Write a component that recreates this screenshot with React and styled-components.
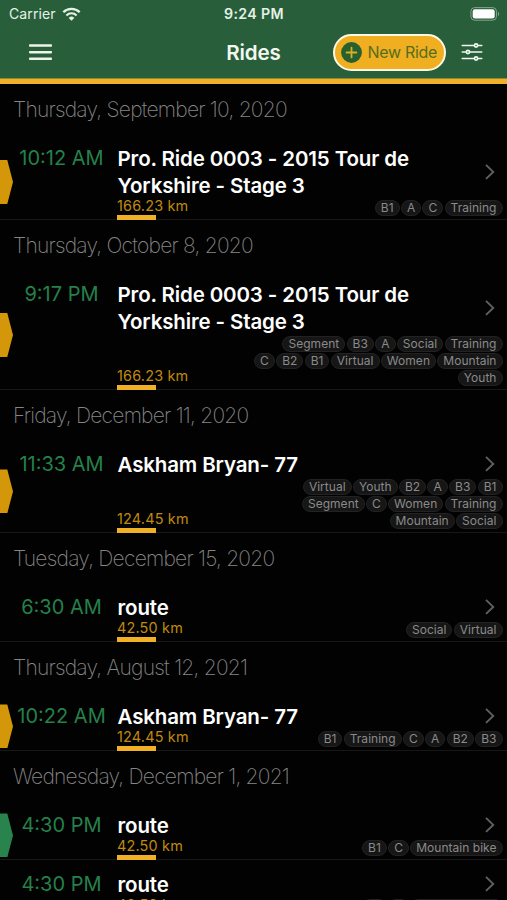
import React from "react";
import styled, { createGlobalStyle } from "styled-components";
import { IoOptionsOutline } from "react-icons/io5";

const GlobalStyle = createGlobalStyle`
  * {
    box-sizing: border-box;
  }

  body {
    margin: 0;
    background: #020202;
    font-family: Inter, "Liberation Sans", sans-serif;
  }
`;

const Screen = styled.div`
  height: 900px;
  overflow: hidden;
  background: #020202;
`;

const Header = styled.header`
  height: 84px;
  background: #285f3a;
  border-bottom: 5px solid #efb02a;
  box-shadow: inset 0 -1px 0 #8d8a30;
`;

const StatusBar = styled.div`
  display: grid;
  grid-template-columns: 1fr auto 1fr;
  align-items: center;
  height: 27px;
  padding: 0 7px 0 9px;
  color: #e6f1e6;
`;

const Carrier = styled.div`
  display: flex;
  align-items: center;
  gap: 6px;
  font-size: 14px;
  letter-spacing: 0.1px;
`;

const Clock = styled.div`
  margin-left: -1px;
  font-size: 14.2px;
  font-weight: 600;
  letter-spacing: 0.35px;
`;

const Battery = styled.div`
  display: flex;
  justify-content: flex-end;
`;

const NavBar = styled.nav`
  display: grid;
  grid-template-columns: minmax(0, 1fr) auto minmax(0, 1fr);
  align-items: center;
  height: 50px;
  padding: 0 22px;
`;

const MenuButton = styled.div`
  display: flex;
  padding-left: 6.5px;
`;

const Title = styled.h1`
  margin: 0;
  color: #f2f8f0;
  font-size: 20.6px;
  font-weight: 600;
  letter-spacing: -0.1px;
`;

const Actions = styled.div`
  display: flex;
  align-items: center;
  justify-content: flex-end;
  gap: 13px;
  color: #f1f7ee;
`;

const NewRide = styled.div`
  display: flex;
  flex: none;
  align-items: center;
  gap: 5.5px;
  width: 113px;
  height: 37px;
  padding-left: 6px;
  border: 2px solid #fdf8e6;
  border-radius: 19px;
  background: #efaf21;
  color: #566d1d;
  font-size: 16px;
  letter-spacing: -0.3px;
  white-space: nowrap;
`;

const DateHeading = styled.h2`
  height: 50px;
  margin: 0;
  padding-left: 13px;
  color: #858585;
  font-size: 21px;
  font-weight: 200;
  line-height: 51px;
  letter-spacing: -0.77px;
`;

const RideRow = styled.div`
  display: flex;
  min-height: 59px;
  padding-top: 11px;
  border-bottom: 1px solid #171717;
`;

const Ribbon = styled.div`
  flex: none;
  align-self: center;
  width: 13px;
  height: 44px;
  background: ${(props) => props.$color || "transparent"};
  clip-path: polygon(0 0, 56% 0, 100% 50%, 56% 100%, 0 100%);
`;

const Time = styled.div`
  flex: none;
  width: 97px;
  color: #25804a;
  font-size: 20px;
  line-height: 27px;
  text-align: center;
  white-space: nowrap;
`;

const RideBody = styled.div`
  flex: 1;
  display: flex;
  flex-direction: column;
  padding-left: 7px;
`;

const RideTop = styled.div`
  display: flex;
  align-items: center;
  justify-content: space-between;
  padding-right: 11px;
`;

const RideName = styled.div`
  width: 320px;
  padding-left: 0.5px;
  color: #fff;
  font-size: 20.5px;
  font-weight: 600;
  line-height: 27px;
  letter-spacing: -0.13px;
`;

const RideBottom = styled.div`
  display: flex;
  flex: 1;
  justify-content: space-between;
  margin-bottom: -1px;
  padding-right: 4.5px;
`;

const Distance = styled.div`
  flex: none;
  align-self: flex-end;
  width: 100px;
  color: #c18a0c;
  font-size: 14.4px;
  line-height: 14px;
  letter-spacing: 0.2px;
  white-space: nowrap;

  &::after {
    content: "";
    display: block;
    width: 39px;
    height: 5px;
    margin-top: 2px;
    background: #f1b127;
  }
`;

const Tags = styled.div`
  display: flex;
  flex-direction: column;
  gap: 1.2px;
  padding: 0.7px 0 3.9px;
`;

const TagLine = styled.div`
  display: flex;
  justify-content: flex-end;
  gap: 1.3px;
`;

const Tag = styled.span`
  height: 16px;
  padding: 0 5px;
  border: 1px solid #222;
  border-radius: 8px;
  background: #161616;
  color: #8a8a8a;
  font-size: 12px;
  line-height: 14px;
  letter-spacing: 0.03px;
  white-space: nowrap;
`;

const sections = [
  {
    date: "Thursday, September 10, 2020",
    rides: [
      {
        time: "10:12 AM",
        name: "Pro. Ride 0003 - 2015 Tour de Yorkshire - Stage 3",
        distance: "166.23 km",
        ribbon: "#d39709",
        tags: [["B1", "A", "C", "Training"]],
      },
    ],
  },
  {
    date: "Thursday, October 8, 2020",
    rides: [
      {
        time: "9:17 PM",
        name: "Pro. Ride 0003 - 2015 Tour de Yorkshire - Stage 3",
        distance: "166.23 km",
        ribbon: "#d39709",
        tags: [
          ["Segment", "B3", "A", "Social", "Training"],
          ["C", "B2", "B1", "Virtual", "Women", "Mountain"],
          ["Youth"],
        ],
      },
    ],
  },
  {
    date: "Friday, December 11, 2020",
    rides: [
      {
        time: "11:33 AM",
        name: "Askham Bryan- 77",
        distance: "124.45 km",
        ribbon: "#d39709",
        tags: [
          ["Virtual", "Youth", "B2", "A", "B3", "B1"],
          ["Segment", "C", "Women", "Training"],
          ["Mountain", "Social"],
        ],
      },
    ],
  },
  {
    date: "Tuesday, December 15, 2020",
    rides: [
      {
        time: "6:30 AM",
        name: "route",
        distance: "42.50 km",
        tags: [["Social", "Virtual"]],
      },
    ],
  },
  {
    date: "Thursday, August 12, 2021",
    rides: [
      {
        time: "10:22 AM",
        name: "Askham Bryan- 77",
        distance: "124.45 km",
        ribbon: "#d39709",
        tags: [["B1", "Training", "C", "A", "B2", "B3"]],
      },
    ],
  },
  {
    date: "Wednesday, December 1, 2021",
    rides: [
      {
        time: "4:30 PM",
        name: "route",
        distance: "42.50 km",
        ribbon: "#28834d",
        tags: [["B1", "C", "Mountain bike"]],
      },
      {
        time: "4:30 PM",
        name: "route",
        distance: "42.50 km",
        tags: [["B1", "C", "Mountain bike"]],
      },
    ],
  },
];

function WifiIcon() {
  return (
    <svg width="19" height="14" viewBox="0 0 19 14" fill="none" stroke="currentColor">
      <path d="M1.3 5.3a11.6 11.6 0 0 1 16.4 0" strokeWidth="2.3" />
      <path d="M4.4 8.4a7.2 7.2 0 0 1 10.2 0" strokeWidth="2.1" />
      <path d="M9.5 13.7 6.7 10.9a4 4 0 0 1 5.6 0Z" fill="currentColor" stroke="none" />
    </svg>
  );
}

function BatteryIcon() {
  return (
    <svg width="30" height="14" viewBox="0 0 30 14">
      <rect x="0.9" y="0.6" width="25.6" height="12.6" rx="3.8" fill="none" stroke="#83a58c" strokeWidth="1" />
      <rect x="2.7" y="2.3" width="22" height="9.2" rx="2.3" fill="#fff" />
      <path d="M28 4.7c1.6.7 1.6 3.7 0 4.4Z" fill="#83a58c" />
    </svg>
  );
}

function MenuIcon() {
  return (
    <svg width="23" height="17" viewBox="0 0 23 17" fill="#edf4e8">
      <rect y="0.3" width="23" height="2.5" rx="0.8" />
      <rect y="6.9" width="23" height="2.5" rx="0.8" />
      <rect y="13.5" width="23" height="2.5" rx="0.8" />
    </svg>
  );
}

function PlusIcon() {
  return (
    <svg width="21" height="21" viewBox="0 0 21 21">
      <circle cx="10.5" cy="10.5" r="10.4" fill="#285f2e" />
      <path d="M10.5 5.6v9.8M5.6 10.5h9.8" stroke="#dcae27" strokeWidth="1.8" strokeLinecap="round" />
    </svg>
  );
}

function Chevron() {
  return (
    <svg width="12" height="17" viewBox="0 0 12 17" fill="none">
      <path d="M2 0.9 9.2 7.9 2 14.9" stroke="#5f5f5f" strokeWidth="2" />
    </svg>
  );
}

function Ride({ ride }) {
  return (
    <RideRow>
      <Ribbon $color={ride.ribbon} />
      <Time>{ride.time}</Time>
      <RideBody>
        <RideTop>
          <RideName>{ride.name}</RideName>
          <Chevron />
        </RideTop>
        <RideBottom>
          <Distance>{ride.distance}</Distance>
          <Tags>
            {ride.tags.map((line, i) => (
              <TagLine key={i}>
                {line.map((tag) => (
                  <Tag key={tag}>{tag}</Tag>
                ))}
              </TagLine>
            ))}
          </Tags>
        </RideBottom>
      </RideBody>
    </RideRow>
  );
}

function App() {
  return (
    <Screen>
      <GlobalStyle />
      <Header>
        <StatusBar>
          <Carrier>
            Carrier
            <WifiIcon />
          </Carrier>
          <Clock>9:24 PM</Clock>
          <Battery>
            <BatteryIcon />
          </Battery>
        </StatusBar>
        <NavBar>
          <MenuButton>
            <MenuIcon />
          </MenuButton>
          <Title>Rides</Title>
          <Actions>
            <NewRide>
              <PlusIcon />
              New Ride
            </NewRide>
            <IoOptionsOutline size={26} />
          </Actions>
        </NavBar>
      </Header>
      {sections.map((section) => (
        <section key={section.date}>
          <DateHeading>{section.date}</DateHeading>
          {section.rides.map((ride, i) => (
            <Ride key={i} ride={ride} />
          ))}
        </section>
      ))}
    </Screen>
  );
}

export default App;
